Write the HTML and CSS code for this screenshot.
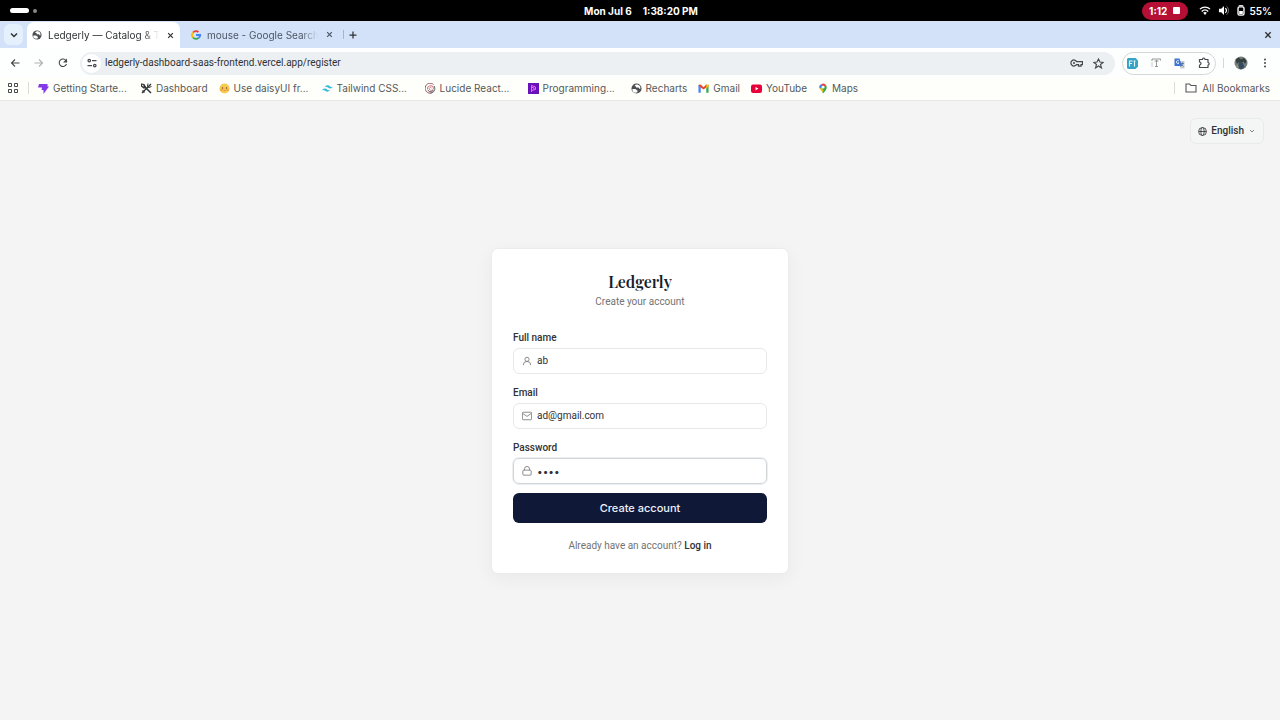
FILE: index.html
```html
<!DOCTYPE html>
<html lang="en">
<head>
<meta charset="utf-8">
<meta name="viewport" content="width=device-width, initial-scale=1">
<title>Ledgerly — Catalog</title>
<link rel="stylesheet" href="styles.css">
</head>
<body>
<svg class="defs" aria-hidden="true">
  <symbol id="globe-solid" viewBox="0 0 24 24"><circle cx="12" cy="12" r="11" fill="#4b4e50"/><path d="M3 13h6c3 0 3 3 5 3v4c-6 3-12-1-11-7zM12 3c-3 1-4 2-4 4h3v3h5c2 0 1 3 4 3 2-5-2-10-8-10z" fill="#fff"/></symbol>
  <symbol id="close" viewBox="0 0 24 24"><path d="M4 4l16 16M20 4L4 20" fill="none" stroke="currentColor" stroke-width="4"/></symbol>
</svg>

<header class="system-bar">
  <div class="workspaces"><span class="workspace-active"></span><span class="workspace-dot"></span></div>
  <div class="clock"><span>Mon Jul 6</span><time>1:38:20 PM</time></div>
  <div class="status">
    <button class="recording" type="button">1:12 <span class="stop"></span></button>
    <svg width="12" height="11" viewBox="0 0 26 24" fill="none" stroke="#fff" stroke-width="3"><path d="M2 9c6-6 16-6 22 0M6 14c4-4 10-4 14 0"/><path d="M9 17c2-2 6-2 8 0l-4 5z" fill="#fff" stroke="none"/></svg>
    <svg width="12" height="11" viewBox="0 0 24 24"><path d="M1 8h5l6-6v20l-6-6H1z" fill="#fff"/><path d="M15 7c3 3 3 7 0 10" fill="none" stroke="#fff" stroke-width="2.500"/><path d="M18 3c5 5 5 13 0 18" fill="none" stroke="#888" stroke-width="2"/></svg>
    <span class="battery"><svg width="8" height="11" viewBox="0 0 16 24"><path d="M4 3V1h8v2" stroke="#fff" stroke-width="2" fill="none"/><rect x="1.500" y="4" width="13" height="18" rx="3" fill="none" stroke="#fff" stroke-width="3"/><path d="M4 13h8v7H4z" fill="#fff"/></svg>55%</span>
  </div>
</header>

<div class="tab-strip">
  <button class="tab-search" type="button" aria-label="Search tabs"><svg width="8" height="8" viewBox="0 0 16 16"><path d="M2 5l6 6 6-6" fill="none" stroke="currentColor" stroke-width="3"/></svg></button>
  <div class="tab tab-current">
    <svg width="10" height="10"><use href="#globe-solid"/></svg>
    <span class="tab-title">Ledgerly — Catalog &amp; T</span>
    <button class="tab-close" type="button" aria-label="Close tab"><svg width="7" height="7"><use href="#close"/></svg></button>
  </div>
  <div class="tab">
    <svg width="10" height="10" viewBox="0 0 24 24" fill="none" stroke-width="4.500"><path d="M5 6a9 9 0 0 1 13-1" stroke="#ea4335"/><path d="M5 6a9 9 0 0 0 0 12" stroke="#fbbc05"/><path d="M5 18a9 9 0 0 0 13 1" stroke="#34a853"/><path d="M12 12h10c0 3-1 5-4 7" stroke="#4285f4"/></svg>
    <span class="tab-title">mouse - Google Search</span>
    <button class="tab-close" type="button" aria-label="Close tab"><svg width="7" height="7"><use href="#close"/></svg></button>
  </div>
  <span class="tab-divider"></span>
  <button class="new-tab" type="button" aria-label="New tab"><svg width="8" height="8" viewBox="0 0 16 16"><path d="M8 1v14M1 8h14" stroke="currentColor" stroke-width="2.500"/></svg></button>
  <button class="window-close" type="button" aria-label="Close window"><svg width="8" height="8"><use href="#close"/></svg></button>
</div>

<div class="toolbar">
  <div class="nav-buttons">
    <button type="button" aria-label="Back"><svg width="10" height="10" viewBox="0 0 20 20"><path d="M19 10H3M10 3l-7 7 7 7" fill="none" stroke="#45484b" stroke-width="2.200"/></svg></button>
    <button type="button" aria-label="Forward"><svg width="10" height="10" viewBox="0 0 20 20"><path d="M1 10h16M10 3l7 7-7 7" fill="none" stroke="#aeb1b3" stroke-width="2.200"/></svg></button>
    <button type="button" aria-label="Reload"><svg width="10" height="10" viewBox="0 0 20 20"><path d="M17 12a7.500 7.500 0 1 1-1-7l2 3" fill="none" stroke="#45484b" stroke-width="2.200"/><path d="M18 1v8h-8z" fill="#45484b"/></svg></button>
  </div>
  <div class="address">
    <button class="site-info" type="button" aria-label="Site information"><svg width="10" height="10" viewBox="0 0 20 20" fill="none" stroke="#45484b" stroke-width="2.500"><circle cx="4.500" cy="5" r="2.500"/><path d="M10 5h9M1 15h9"/><circle cx="15.500" cy="15" r="2.500"/></svg></button>
    <input class="url" type="text" aria-label="Address" value="ledgerly-dashboard-saas-frontend.vercel.app/register">
    <button type="button" aria-label="Passwords"><svg width="13" height="10" viewBox="0 0 26 20" fill="none" stroke="#45484b" stroke-width="2.500"><path d="M13 7a6 6 0 1 0 0 6h4v3h5v-3h3V7z"/><circle cx="8" cy="10" r="2" fill="#45484b" stroke="none"/></svg></button>
    <button type="button" aria-label="Bookmark this page"><svg width="11" height="11" viewBox="0 0 22 22"><path d="M11 2l3 6 6 1-5 4 2 7-6-4-6 4 2-7-5-4 6-1z" fill="none" stroke="#45484b" stroke-width="2.200"/></svg></button>
  </div>
  <div class="extensions">
    <button type="button" aria-label="Font extension"><svg width="11" height="11" viewBox="0 0 22 22"><path d="M2 0h15l5 5v12l-5 5H2l-2-2V2z" fill="#36a3c5"/><path d="M5 17V6h6M5 11h5M13 6h4M15 6v11" fill="none" stroke="#e4f7fb" stroke-width="2.200"/></svg></button>
    <button type="button" aria-label="Text extension"><svg width="10" height="10" viewBox="0 0 20 20" fill="none" stroke="#777" stroke-width="1.500"><path d="M2 6V2M2 2h17v3M11 4v13M8 17h6M7 6h8" /><path d="M2 8v10" stroke="#bbb"/></svg></button>
    <button type="button" aria-label="Translate"><svg width="11" height="11" viewBox="0 0 22 22"><path d="M9 6h12v15H13z" fill="#c7cbd0"/><path d="M1 1h10l5 15H1z" fill="#3f75d4"/><path d="M10 6a3 3 0 1 0 0 4H7" fill="none" stroke="#fff" stroke-width="1.500"/><path d="M13 11h7M17 9c0 5-2 6-4 8M15 13l4 4" fill="none" stroke="#496b9e" stroke-width="1.500"/></svg></button>
    <button type="button" aria-label="Extensions"><svg width="12" height="12" viewBox="0 0 24 24"><path d="M3 5h6c0-4 5-4 5 0h6v6c3 0 3 5 0 5v5H3v-5c4 0 4-6 0-6z" fill="none" stroke="#45484b" stroke-width="2.400" stroke-linejoin="round"/></svg></button>
  </div>
  <span class="toolbar-divider"></span>
  <button type="button" aria-label="Profile"><svg width="14" height="14" viewBox="0 0 28 28"><circle cx="14" cy="14" r="13" fill="#737d7b"/><path d="M3 7l6-4 5 4 6-3 5 6-3 6-3-5-4 3-5-2-4 4z" fill="#373f3e"/><path d="M10 12l7 1 4 9-7 5-6-4z" fill="#334b60"/><path d="M5 17l4 3 1 5-5-4z" fill="#a19379"/></svg></button>
  <button type="button" aria-label="Menu"><svg width="4" height="10" viewBox="0 0 8 20" fill="#45484b"><circle cx="4" cy="3" r="2"/><circle cx="4" cy="10" r="2"/><circle cx="4" cy="17" r="2"/></svg></button>
</div>

<nav class="bookmarks" aria-label="Bookmarks">
  <button class="apps" type="button" aria-label="Apps"><svg width="10" height="10" viewBox="0 0 20 20" fill="none" stroke="#45484b" stroke-width="2"><path d="M1 1h6v6H1zM13 1h6v6h-6zM1 13h6v6H1zM13 13h6v6h-6z"/></svg></button>
  <span class="bookmark-divider"></span>
  <a href="#" class="bookmark full"><svg width="11" height="11" viewBox="0 0 22 22"><path d="M2 2h17v5h3l-11 15v-8H7l1-5H0z" fill="#8339e8"/></svg>Getting Starte...</a>
  <a href="#" class="bookmark"><svg width="11" height="11" viewBox="0 0 22 22" fill="none" stroke="#303233"><path d="M5 5l15 15" stroke-width="3"/><path d="M1 2l5 1 3 6-3 1-5-4zM20 2L2 20" stroke-width="2.500"/><path d="M14 1l-1 6 3 2 5-2" stroke-width="2"/><path d="M3 15l4 4" stroke-width="3"/></svg>Dashboard</a>
  <a href="#" class="bookmark full"><svg width="11" height="11" viewBox="0 0 22 22"><circle cx="11" cy="11" r="10" fill="#f9c94e"/><circle cx="7" cy="10" r="1.500" fill="#694a2a"/><circle cx="15" cy="10" r="1.500" fill="#694a2a"/><path d="M3 14h4M15 14h4" stroke="#f39055" stroke-width="3"/><path d="M9 14q2 2 4 0" fill="none" stroke="#8d5227"/></svg>Use daisyUI fr...</a>
  <a href="#" class="bookmark full"><svg width="11" height="11" viewBox="0 0 24 24"><path d="M12 5c-3 0-5 1.500-6 4.500 2-2 4-2 6 0s5 3 7 2c2-.6 4-2 4-4-3 2-4 1-6-.5-1-1-3-2-5-2zM6 12c-3 0-5 1.500-6 4.500 2-2 4-2 6 0s5 3 7 2c2-.6 4-2 4-4-3 2-4 1-6-.5-1-1-3-2-5-2z" fill="#35bbdf"/></svg>Tailwind CSS...</a>
  <a href="#" class="bookmark full"><svg width="11" height="11" viewBox="0 0 22 22" fill="none" stroke-width="2"><path d="M17 3A10 10 0 1 0 13 20" stroke="#9b5360"/><path d="M18 6c4 6 0 14-7 14" stroke="#565258"/><path d="M5 13a6 6 0 1 1 12-3c0 5-6 6-8 3s2-6 4-3" stroke="#d37883"/><path d="M6 14c2 5 9 4 11 0" stroke="#565258"/></svg>Lucide React...</a>
  <a href="#" class="bookmark full"><svg width="11" height="11" viewBox="0 0 22 22"><path d="M0 0h22v22H0z" fill="#6813ba"/><path d="M7 18V5l8 3v5l-8 2M7 8l5 2v3" fill="none" stroke="#eb69fb" stroke-width="2"/></svg>Programming...</a>
  <a href="#" class="bookmark"><svg width="11" height="11"><use href="#globe-solid"/></svg>Recharts</a>
  <a href="#" class="bookmark"><svg width="11" height="11" viewBox="0 0 24 20"><path d="M1 2v17h5V7z" fill="#4285f4"/><path d="M18 7v12h5V2z" fill="#34a853"/><path d="M1 3l5 5 6 4 6-4 4-5-4-2-6 6-6-6-4 1z" fill="#e94335"/><path d="M18 7V2l5-1v5l-5 4z" fill="#fbbc05"/></svg>Gmail</a>
  <a href="#" class="bookmark"><svg width="11" height="9" viewBox="0 0 22 18"><rect width="22" height="17" y="1" rx="4" fill="#e60037"/><path d="M9 6l6 3-6 4z" fill="#fff"/></svg>YouTube</a>
  <a href="#" class="bookmark"><svg width="10" height="11" viewBox="0 0 20 24"><path d="M2 11a8 8 0 0 1 5-9l5 5-6 7z" fill="#4285f4"/><path d="M7 2q6-3 10 3l-6 5z" fill="#ea4335"/><path d="M17 5q4 8-7 18-2-7-5-9l6-4z" fill="#34a853"/><path d="M3 13l3-3 5 5-1 5z" fill="#fbbc05"/><circle cx="10" cy="9" r="3" fill="#fff"/></svg>Maps</a>
  <div class="all-bookmarks"><span class="bookmark-divider"></span><a href="#" class="bookmark"><svg width="12" height="10" viewBox="0 0 24 20"><path d="M2 2h7l3 3h10v13H2z" fill="none" stroke="#55585a" stroke-width="2.200"/></svg>All Bookmarks</a></div>
</nav>

<main class="page">
  <button class="language" type="button"><svg width="9" height="9" viewBox="0 0 24 24" fill="none" stroke="currentColor" stroke-width="2.200"><circle cx="12" cy="12" r="10.500"/><ellipse cx="12" cy="12" rx="4.500" ry="10.500"/><path d="M2 12h20"/></svg>English<svg width="8" height="8" viewBox="0 0 16 16"><path d="M4 6l4 4 4-4" fill="none" stroke="#777" stroke-width="1.800"/></svg></button>
  <section class="card">
    <h1>Ledgerly</h1>
    <p class="subtitle">Create your account</p>
    <form>
      <div class="field">
        <label for="name">Full name</label>
        <div class="control"><svg width="10" height="10" viewBox="0 0 24 24"><circle cx="12" cy="8" r="5"/><path d="M3 22a9 9 0 0 1 18 0"/></svg><input id="name" type="text" value="ab"></div>
      </div>
      <div class="field">
        <label for="email">Email</label>
        <div class="control"><svg width="10" height="10" viewBox="0 0 24 24"><rect x="1" y="3" width="22" height="18" rx="2"/><path d="M2 6l10 7 10-7"/></svg><input id="email" type="email" value="ad@gmail.com"></div>
      </div>
      <div class="field">
        <label for="password">Password</label>
        <div class="control control-active"><svg width="10" height="10" viewBox="0 0 24 24"><rect x="2" y="10" width="20" height="12" rx="2"/><path d="M6 10V7a6 6 0 0 1 12 0v3"/></svg><input id="password" type="password" value="abcd"></div>
      </div>
      <button class="submit" type="button">Create account</button>
    </form>
    <p class="login">Already have an account? <a href="#">Log in</a></p>
  </section>
</main>
</body>
</html>
```
FILE: styles.css
```css
* { box-sizing: border-box; }
body {
  margin: 0;
  min-height: 100vh;
  display: flex;
  flex-direction: column;
  font-family: Inter, sans-serif;
  font-size: 10px;
  line-height: 14px;
  color: #303234;
  background: #f4f4f4;
}
button, input { font: inherit; color: inherit; border: 0; padding: 0; background: none; }
button { display: flex; align-items: center; justify-content: center; }
a { color: inherit; text-decoration: none; }
svg { flex: none; }
.defs { position: absolute; width: 0; height: 0; }

.system-bar {
  display: grid;
  grid-template-columns: 1fr auto 1fr;
  align-items: center;
  height: 21px;
  padding: 0 8px 0 10px;
  color: #fff;
  background: #000;
  font-weight: 700;
}
.workspaces, .clock, .status, .battery { display: flex; align-items: center; }
.workspaces { gap: 4px; }
.workspace-active { width: 19px; height: 5px; border-radius: 3px; background: #fff; }
.workspace-dot { width: 4px; height: 4px; border-radius: 50%; background: #888; }
.clock { gap: 11px; }
.status { justify-content: flex-end; gap: 7px; }
.battery { gap: 4px; font-weight: 600; }
.recording { gap: 6px; height: 18px; padding: 0 8px 0 7px; margin-right: 4px; border-radius: 9px; background: #b60f35; }
.stop { width: 7px; height: 7px; border-radius: 1px; background: #fff; }

.tab-strip {
  display: flex;
  align-items: center;
  height: 27px;
  padding: 0 8px 0 4px;
  background: #d3e2f8;
}
.tab-search { width: 19px; height: 21px; margin-right: 4px; border-radius: 6px; background: #e4f0fb; }
.tab { display: flex; align-items: center; gap: 6px; width: 153px; height: 23px; padding: 0 5px; color: #4b5566; }
.tab-current { margin-right: 6px; height: 26px; align-self: flex-end; border-radius: 7px 7px 0 0; color: #303234; background: #fff; }
.tab-title {
  flex: 1;
  min-width: 0;
  white-space: nowrap;
  mask-image: linear-gradient(to right, #000 85%, transparent);
}
.tab-close { width: 10px; height: 14px; }
.tab-divider { width: 1px; height: 9px; margin: 0 4px; background: #a7b5ce; }
.new-tab { width: 10px; height: 14px; }
.window-close { margin-left: auto; }

.toolbar {
  display: flex;
  align-items: center;
  height: 30px;
  padding: 0 13px 0 10px;
  background: #fdfefe;
}
.nav-buttons { display: flex; gap: 14px; margin-right: 12px; }
.address {
  display: flex;
  flex: 1;
  align-items: center;
  gap: 10px;
  height: 23px;
  padding: 0 11px 0 2px;
  border-radius: 12px;
  background: #ecf0f3;
}
.site-info { width: 19px; height: 19px; margin-right: -6px; border-radius: 50%; background: #fff; }
.url { flex: 1; min-width: 0; outline: 0; font-family: Roboto, sans-serif; }
.extensions {
  display: flex;
  align-items: center;
  gap: 13px;
  height: 23px;
  margin-left: 7px;
  padding: 0 5px 0 4px;
  border: 1px solid #d3d8d6;
  border-radius: 12px;
}
.toolbar-divider { width: 1px; height: 10px; margin: 0 10px 0 7px; background: #d2d8d8; }
.toolbar > button:last-child { margin-left: 15px; }

.bookmarks {
  display: flex;
  align-items: center;
  height: 23px;
  padding: 0 10px 2px 8px;
  border-bottom: 1px solid #e7e8e5;
  color: #55585a;
  background: #fefffb;
  white-space: nowrap;
}
.bookmark-divider { width: 1px; height: 12px; margin: 0 10px; background: #d9dcda; }
.apps + .bookmark-divider { margin: 0 9px 0 10px; }
.bookmark { display: flex; align-items: center; gap: 4px; margin-right: 11px; }
.full { width: 92px; }
.all-bookmarks { display: flex; align-items: center; margin-left: auto; }
.all-bookmarks .bookmark { gap: 5px; margin-right: 0; }

.page {
  position: relative;
  display: flex;
  flex: 1;
  align-items: center;
  justify-content: center;
  font-family: Roboto, sans-serif;
}
.language {
  position: absolute;
  top: 17px;
  right: 16px;
  gap: 4px;
  height: 26px;
  padding: 0 7px;
  border: 1px solid #e7ebea;
  border-radius: 6px;
  background: #f3f6f5;
  font-weight: 500;
}
.card {
  width: 298px;
  max-width: 100%;
  padding: 21px 21px 20px;
  border: 1px solid #ececec;
  border-radius: 7px;
  background: #fff;
  box-shadow: 0 5px 18px #0000000c;
}
h1 { margin: 0 0 1px; font: 600 16px/24px "Playfair Display", "Liberation Serif", serif; color: #151c2c; text-align: center; }
.subtitle, .login { margin: 0; color: #737373; text-align: center; }
form { display: flex; flex-direction: column; gap: 12px; margin: 22px 0 16px; }
.field { display: flex; flex-direction: column; gap: 3px; font-weight: 500; }
.control {
  display: flex;
  align-items: center;
  gap: 5px;
  height: 26px;
  padding: 0 8px;
  border: 1px solid #e8e8e8;
  border-radius: 6px;
  font-weight: 400;
}
.control svg { fill: none; stroke: #777; stroke-width: 2; }
.control input { flex: 1; min-width: 0; outline: 0; }
.control input[type="password"] { font-family: Inter, sans-serif; }
.control-active { border-color: #d3d6d8; box-shadow: 0 0 0 1px #eceeef; }
.submit { height: 30px; margin-top: -3px; border-radius: 6px; color: #eef1fa; background: #0f1836; font-family: Inter, sans-serif; font-size: 11px; font-weight: 500; }
.login a { color: #303234; font-weight: 500; }
```
